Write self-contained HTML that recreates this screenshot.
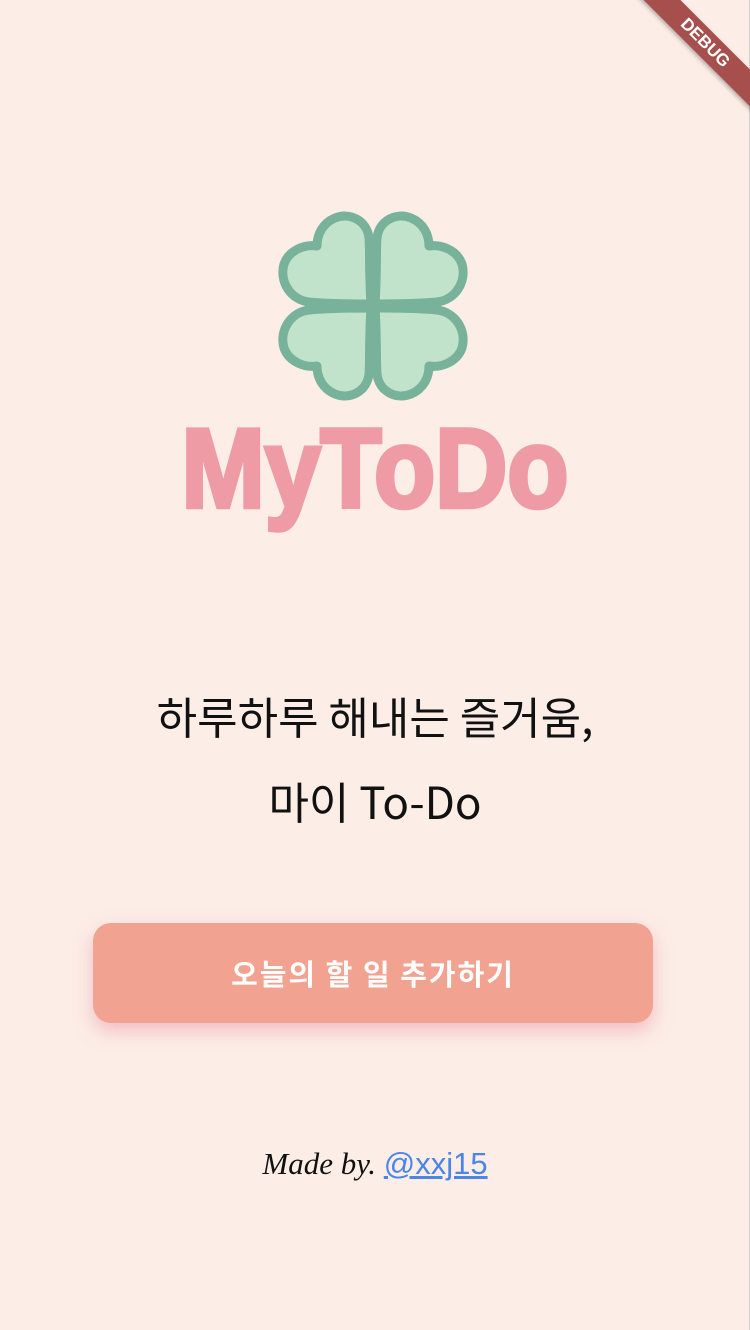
<!DOCTYPE html>
<html><head><meta charset="utf-8"><style>
html,body{margin:0;padding:0}
body{width:750px;height:1330px;background:#fcede6;position:relative;overflow:hidden;font-family:"Liberation Sans","Noto Sans CJK KR",sans-serif}
.edge{position:absolute;right:0;top:0;width:1px;height:1330px;background:#cfcfcf}
.logo{position:absolute;left:0;top:405px;width:750px;text-align:center;font:bold 100px "Liberation Sans",sans-serif;color:#ef9ba6;-webkit-text-stroke:4px #ef9ba6;transform:scaleY(1.12);letter-spacing:0px;transform-origin:top}
.t{position:absolute;left:0;width:750px;text-align:center;font-family:"Noto Sans CJK KR",sans-serif;font-weight:400;font-size:44px;color:#111}
.btn{position:absolute;left:93px;top:923px;width:560px;height:100px;border-radius:18px;background:#f2a291;box-shadow:0 8px 18px rgba(235,150,170,.55);color:#fff;text-align:center;line-height:100px;font-size:29px;font-weight:bold;letter-spacing:2px;font-family:"Noto Sans CJK KR",sans-serif}
.foot{position:absolute;left:0;width:750px;top:1146px;text-align:center;font-size:31px;color:#111;font-family:"Liberation Serif",serif;font-style:italic}
.foot a{color:#4a86e8;text-decoration:underline;font-style:normal;font-family:"Liberation Sans",sans-serif}
.ribbon{position:absolute;right:-40px;top:30px;width:170px;height:26px;background:#a64f4c;transform:rotate(45deg);color:#fff;font:bold 17px "Liberation Sans",sans-serif;text-align:center;line-height:26px;box-shadow:0 2px 4px rgba(0,0,0,.3)}
</style></head><body>
<div class="edge"></div>
<svg style="position:absolute;left:0;top:0" width="750" height="600">
<defs><path id="h" d="M2 -2 C4 -30 3 -55 4 -68 C6 -86 24 -94 38 -88 C50 -83 56 -72 56 -60 C68 -62 84 -56 89 -42 C94 -24 82 -6 64 -4 C44 -2 20 -2 2 -2 Z"/></defs>
<g transform="translate(373,306)" fill="#c2e3cb" stroke="#78b29a" stroke-width="9" stroke-linejoin="round">
<use href="#h"/>
<use href="#h" transform="scale(-1,1)"/>
<use href="#h" transform="scale(1,-1)"/>
<use href="#h" transform="scale(-1,-1)"/>
</g></svg>
<div class="logo">MyToDo</div>
<div class="t" style="top:683px">하루하루 해내는 즐거움,</div>
<div class="t" style="top:768px">마이 To-Do</div>
<div class="btn">오늘의 할 일 추가하기</div>
<div class="foot">Made by. <a>@xxj15</a></div>
<div class="ribbon">DEBUG</div>
</body></html>
